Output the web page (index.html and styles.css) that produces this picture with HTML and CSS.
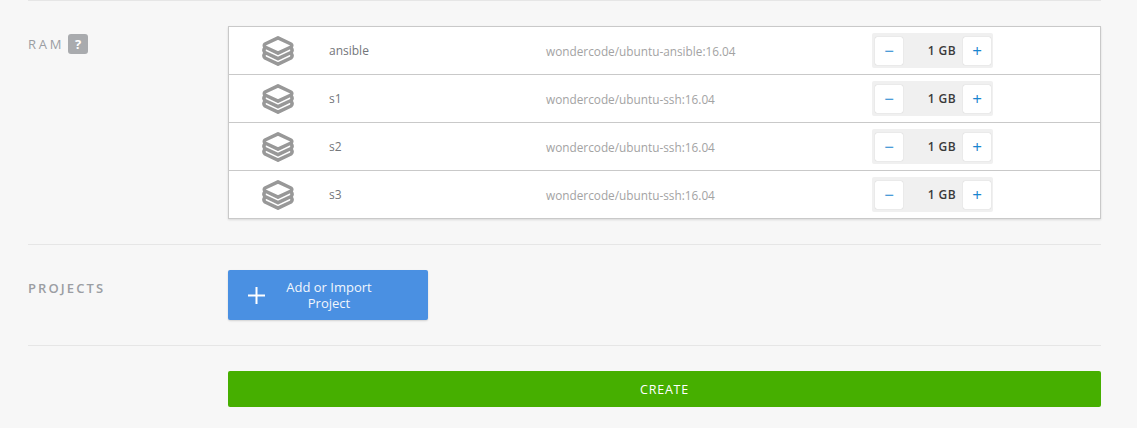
FILE: index.html
```html
<!DOCTYPE html>
<html lang="en">
<head>
<meta charset="utf-8">
<title>Create</title>
<link rel="stylesheet" href="styles.css">
</head>
<body>
<svg class="defs" width="0" height="0" aria-hidden="true">
  <symbol id="stack" viewBox="0 0 32 30">
    <path d="M16 1.800 L29 8 Q30.500 9.500 29 11 L16 17.200 L3 11 Q1.500 9.500 3 8 Z" fill="none" stroke="currentColor" stroke-width="3.500" stroke-linejoin="round"/>
    <path d="M3 11.500 Q0.800 14.500 3 16.500 L16 22.700 L29 16.500 Q31.200 14.500 29 11.500" fill="none" stroke="currentColor" stroke-width="3.500" stroke-linejoin="round"/>
    <path d="M3 17 Q0.800 20 3 22 L16 28.200 L29 22 Q31.200 20 29 17" fill="none" stroke="currentColor" stroke-width="3.500" stroke-linejoin="round"/>
  </symbol>
</svg>
<main class="page">
  <section class="row row-ram">
    <div class="label-col">
      <span class="label">RAM</span><span class="help">?</span>
    </div>
    <div class="content">
      <div class="table">
        <div class="item">
          <div class="icon-cell"><svg class="stack"><use href="#stack"/></svg></div>
          <div class="name">ansible</div>
          <div class="image">wondercode/ubuntu-ansible:16.04</div>
          <div class="stepper"><button class="step minus">−</button><span class="value">1 GB</span><button class="step plus">+</button></div>
        </div>
        <div class="item">
          <div class="icon-cell"><svg class="stack"><use href="#stack"/></svg></div>
          <div class="name">s1</div>
          <div class="image">wondercode/ubuntu-ssh:16.04</div>
          <div class="stepper"><button class="step minus">−</button><span class="value">1 GB</span><button class="step plus">+</button></div>
        </div>
        <div class="item">
          <div class="icon-cell"><svg class="stack"><use href="#stack"/></svg></div>
          <div class="name">s2</div>
          <div class="image">wondercode/ubuntu-ssh:16.04</div>
          <div class="stepper"><button class="step minus">−</button><span class="value">1 GB</span><button class="step plus">+</button></div>
        </div>
        <div class="item">
          <div class="icon-cell"><svg class="stack"><use href="#stack"/></svg></div>
          <div class="name">s3</div>
          <div class="image">wondercode/ubuntu-ssh:16.04</div>
          <div class="stepper"><button class="step minus">−</button><span class="value">1 GB</span><button class="step plus">+</button></div>
        </div>
      </div>
    </div>
  </section>
  <section class="row row-projects">
    <div class="label-col">
      <span class="label label-bold">PROJECTS</span>
    </div>
    <div class="content">
      <button class="add">
        <svg class="add-icon" viewBox="0 0 17 17"><path d="M8.500 0V17M0 8.500H17" stroke="#fff" stroke-width="2" fill="none"/></svg>
        <span class="add-text">Add or Import Project</span>
      </button>
    </div>
  </section>
  <section class="row row-create">
    <div class="label-col"></div>
    <div class="content">
      <button class="create">CREATE</button>
    </div>
  </section>
</main>
</body>
</html>
```
FILE: styles.css
```css
* { box-sizing: border-box; }
html, body { margin: 0; padding: 0; }
body {
  background: #f7f7f7;
  font-family: "Open Sans", sans-serif;
  height: 428px;
  overflow: hidden;
}
.defs { position: absolute; }
.page { padding: 0 36px 0 28px; }
.row {
  display: flex;
  border-top: 1px solid #e6e6e6;
  padding: 25px 0;
}
.row-create { padding-bottom: 0; }
.label-col {
  width: 200px;
  flex: none;
  display: flex;
  align-items: flex-start;
}
.label {
  font-size: 13px;
  line-height: 18px;
  letter-spacing: 2.700px;
  color: #9b9ea3;
  margin-top: 9px;
}
.label-bold {
  font-weight: 600;
  letter-spacing: 2.100px;
  margin-top: 9px;
}
.help {
  width: 20px;
  height: 20px;
  margin: 8px 0 0 4px;
  border-radius: 3px;
  background: #a9abae;
  color: #fff;
  font-size: 13px;
  font-weight: 700;
  line-height: 20px;
  text-align: center;
}
.content { flex: 1; min-width: 0; }
.table {
  background: #fff;
  border: 1px solid #c9c9c9;
  box-shadow: 0 1px 2px rgba(0, 0, 0, .12);
}
.item {
  display: flex;
  align-items: center;
  height: 47px;
}
.item + .item {
  height: 48px;
  border-top: 1px solid #c9c9c9;
}
.icon-cell {
  width: 100px;
  flex: none;
  display: flex;
  justify-content: center;
  padding-right: 2px;
}
.stack {
  width: 32px;
  height: 30px;
  color: #989898;
}
.name {
  width: 217px;
  flex: none;
  font-size: 12px;
  color: #73767a;
}
.image {
  width: 326px;
  flex: none;
  font-size: 11.800px;
  color: #a3a3a3;
}
.stepper {
  width: 121px;
  height: 35px;
  display: flex;
  align-items: center;
  justify-content: space-between;
  padding: 0 2px 0 3px;
  background: #f0f0f0;
  border-radius: 2px;
}
.step {
  width: 28px;
  height: 28px;
  padding: 0;
  border: 0;
  border-radius: 2px;
  background: #fff;
  box-shadow: 0 0 1px rgba(0, 0, 0, .25);
  color: #1a86d0;
  font-family: "Open Sans", sans-serif;
  font-size: 17px;
  line-height: 28px;
  text-align: center;
}
.value {
  flex: 1;
  text-align: right;
  padding-right: 7px;
  font-size: 12px;
  font-weight: 600;
  letter-spacing: .4px;
  color: #3a3a3a;
}
.add {
  width: 200px;
  height: 50px;
  display: flex;
  align-items: center;
  padding: 0 20px;
  border: 0;
  border-radius: 2px;
  background: #4a90e2;
  box-shadow: 0 1px 2px rgba(0, 0, 0, .15);
  color: #f1f6fd;
  font-family: "Open Sans", sans-serif;
  font-size: 13px;
  line-height: 16px;
}
.add-icon {
  width: 17px;
  height: 17px;
  flex: none;
}
.add-text {
  flex: 1;
  padding-right: 15px;
  text-align: center;
}
.create {
  display: block;
  width: 100%;
  height: 36px;
  border: 0;
  border-radius: 2px;
  background: #46af00;
  color: #fff;
  font-family: "Open Sans", sans-serif;
  font-size: 12.500px;
  font-weight: 500;
  letter-spacing: .8px;
}
```
